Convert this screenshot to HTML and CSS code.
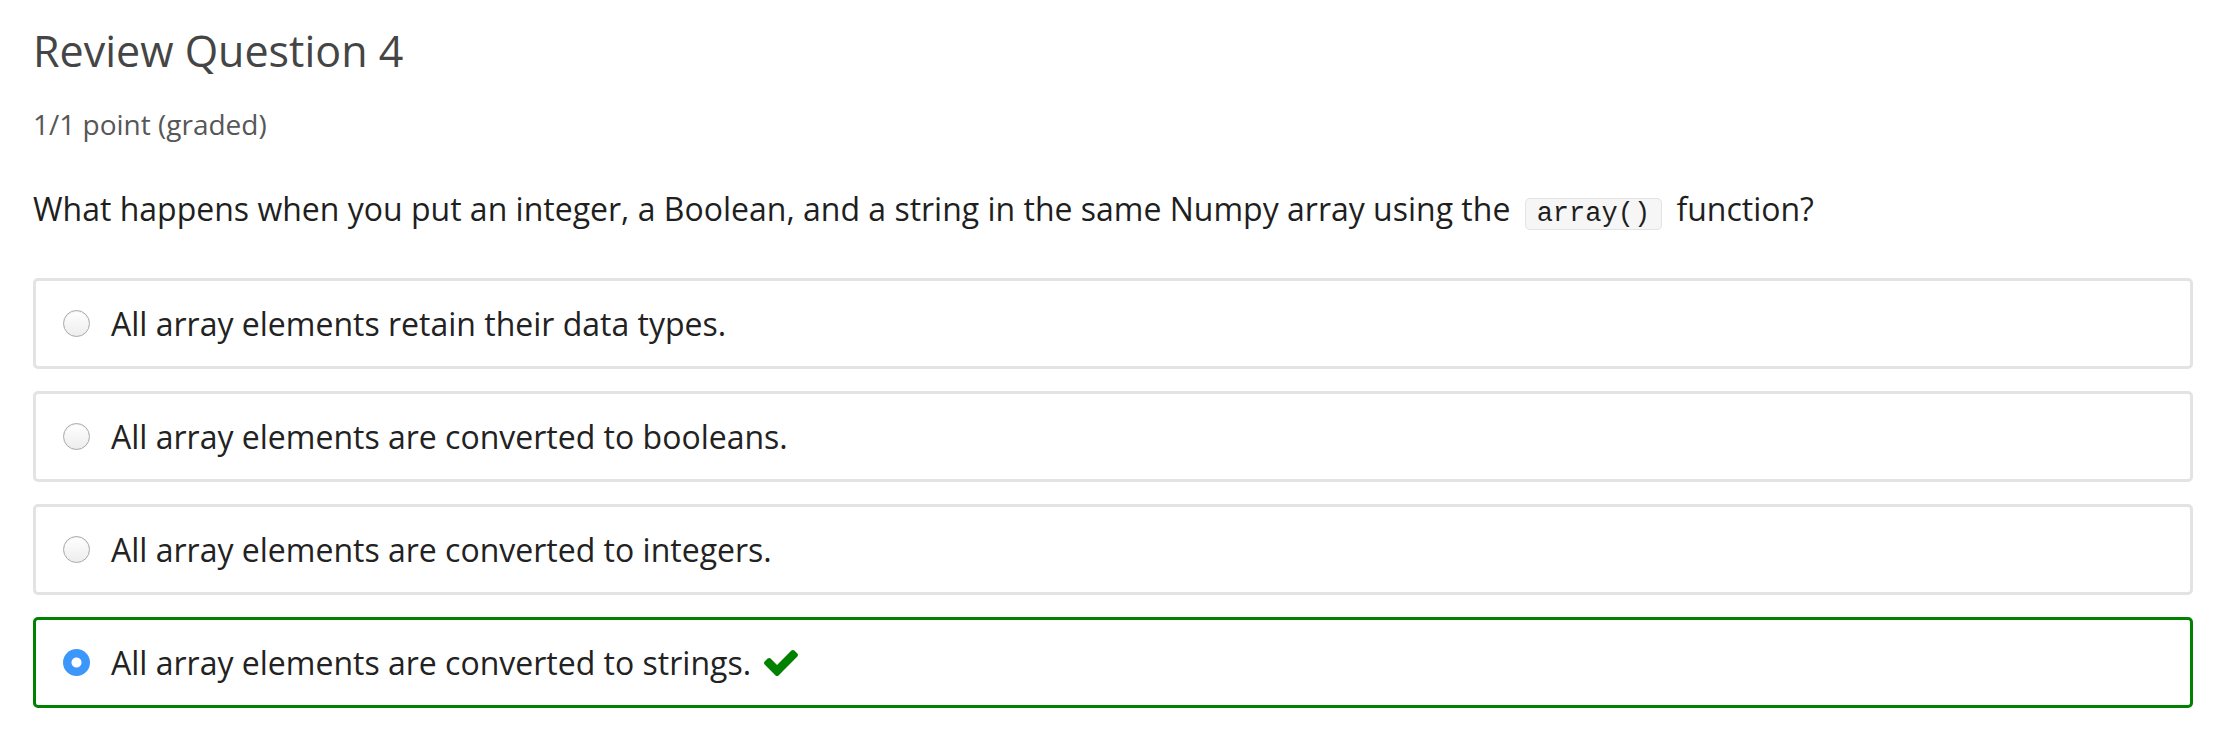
FILE: index.html
```html
<!DOCTYPE html>
<html lang="en">
<head>
<meta charset="utf-8">
<title>Review Question 4</title>
<link rel="stylesheet" href="styles.css">
</head>
<body>
<div class="problem">
  <h1 class="title">Review Question 4</h1>
  <div class="score">1/1 point (graded)</div>
  <p class="question">What happens when you put an integer, a Boolean, and a string in the same Numpy array using the <code class="code">array()</code> function?</p>
  <div class="choices">
    <label class="choice">
      <span class="radio"></span>
      <span class="choice-text">All array elements retain their data types.</span>
    </label>
    <label class="choice">
      <span class="radio"></span>
      <span class="choice-text">All array elements are converted to booleans.</span>
    </label>
    <label class="choice">
      <span class="radio"></span>
      <span class="choice-text">All array elements are converted to integers.</span>
    </label>
    <label class="choice choice-correct">
      <span class="radio radio-checked"></span>
      <span class="choice-text">All array elements are converted to strings.</span>
      <svg class="check" viewBox="121 334 1550 1188" width="34" height="26" aria-hidden="true"><path d="M1671 566q0 40-28 68l-724 724-136 136q-28 28-68 28t-68-28l-136-136-362-362q-28-28-28-68t28-68l136-136q28-28 68-28t68 28l294 295 656-657q28-28 68-28t68 28l136 136q28 28 28 68z" fill="#008100"/></svg>
    </label>
  </div>
</div>
</body>
</html>
```
FILE: styles.css
```css
html, body {
  margin: 0;
  padding: 0;
  background: #ffffff;
}

body {
  font-family: "Open Sans", "Noto Sans", "Liberation Sans", sans-serif;
  color: #222222;
}

.problem {
  padding: 25px 0 0 33px;
  width: 2160px;
}

.title {
  margin: 0;
  font-size: 43px;
  line-height: 52px;
  font-weight: 400;
  color: #454545;
}

.score {
  margin-top: 29px;
  font-size: 28px;
  line-height: 36px;
  color: #575757;
}

.question {
  margin: 43px 0 0 0;
  font-size: 32px;
  line-height: 48px;
  color: #1f1f1f;
}

.code {
  font-family: "Liberation Mono", "Courier New", monospace;
  font-size: 27px;
  line-height: 31px;
  color: #1e1e1e;
  background: #f6f6f6;
  border: 1px solid #e3e3e3;
  border-radius: 5px;
  padding: 0 11px;
  margin: 0 6px;
}

.choices {
  margin-top: 45px;
  display: flex;
  flex-direction: column;
  gap: 22px;
}

.choice {
  display: flex;
  align-items: center;
  border: 3px solid #e3e3e3;
  border-radius: 5px;
  padding: 18px 0 18px 27px;
  font-size: 32px;
  line-height: 49px;
  color: #222222;
}

.choice-correct {
  border-color: #008100;
}

.radio {
  width: 25px;
  height: 25px;
  border-radius: 50%;
  border: 1px solid #a8a8a8;
  background: linear-gradient(#ffffff, #ededed);
  box-shadow: inset 0 1px 1px rgba(0, 0, 0, 0.06);
  margin-right: 21px;
  flex: none;
  box-sizing: content-box;
}

.radio-checked {
  width: 27px;
  height: 27px;
  border: none;
  box-shadow: none;
  background: radial-gradient(circle, #ffffff 0 4.5px, #3c97fb 5.5px);
}

.check {
  margin-left: 13px;
  flex: none;
}
```
